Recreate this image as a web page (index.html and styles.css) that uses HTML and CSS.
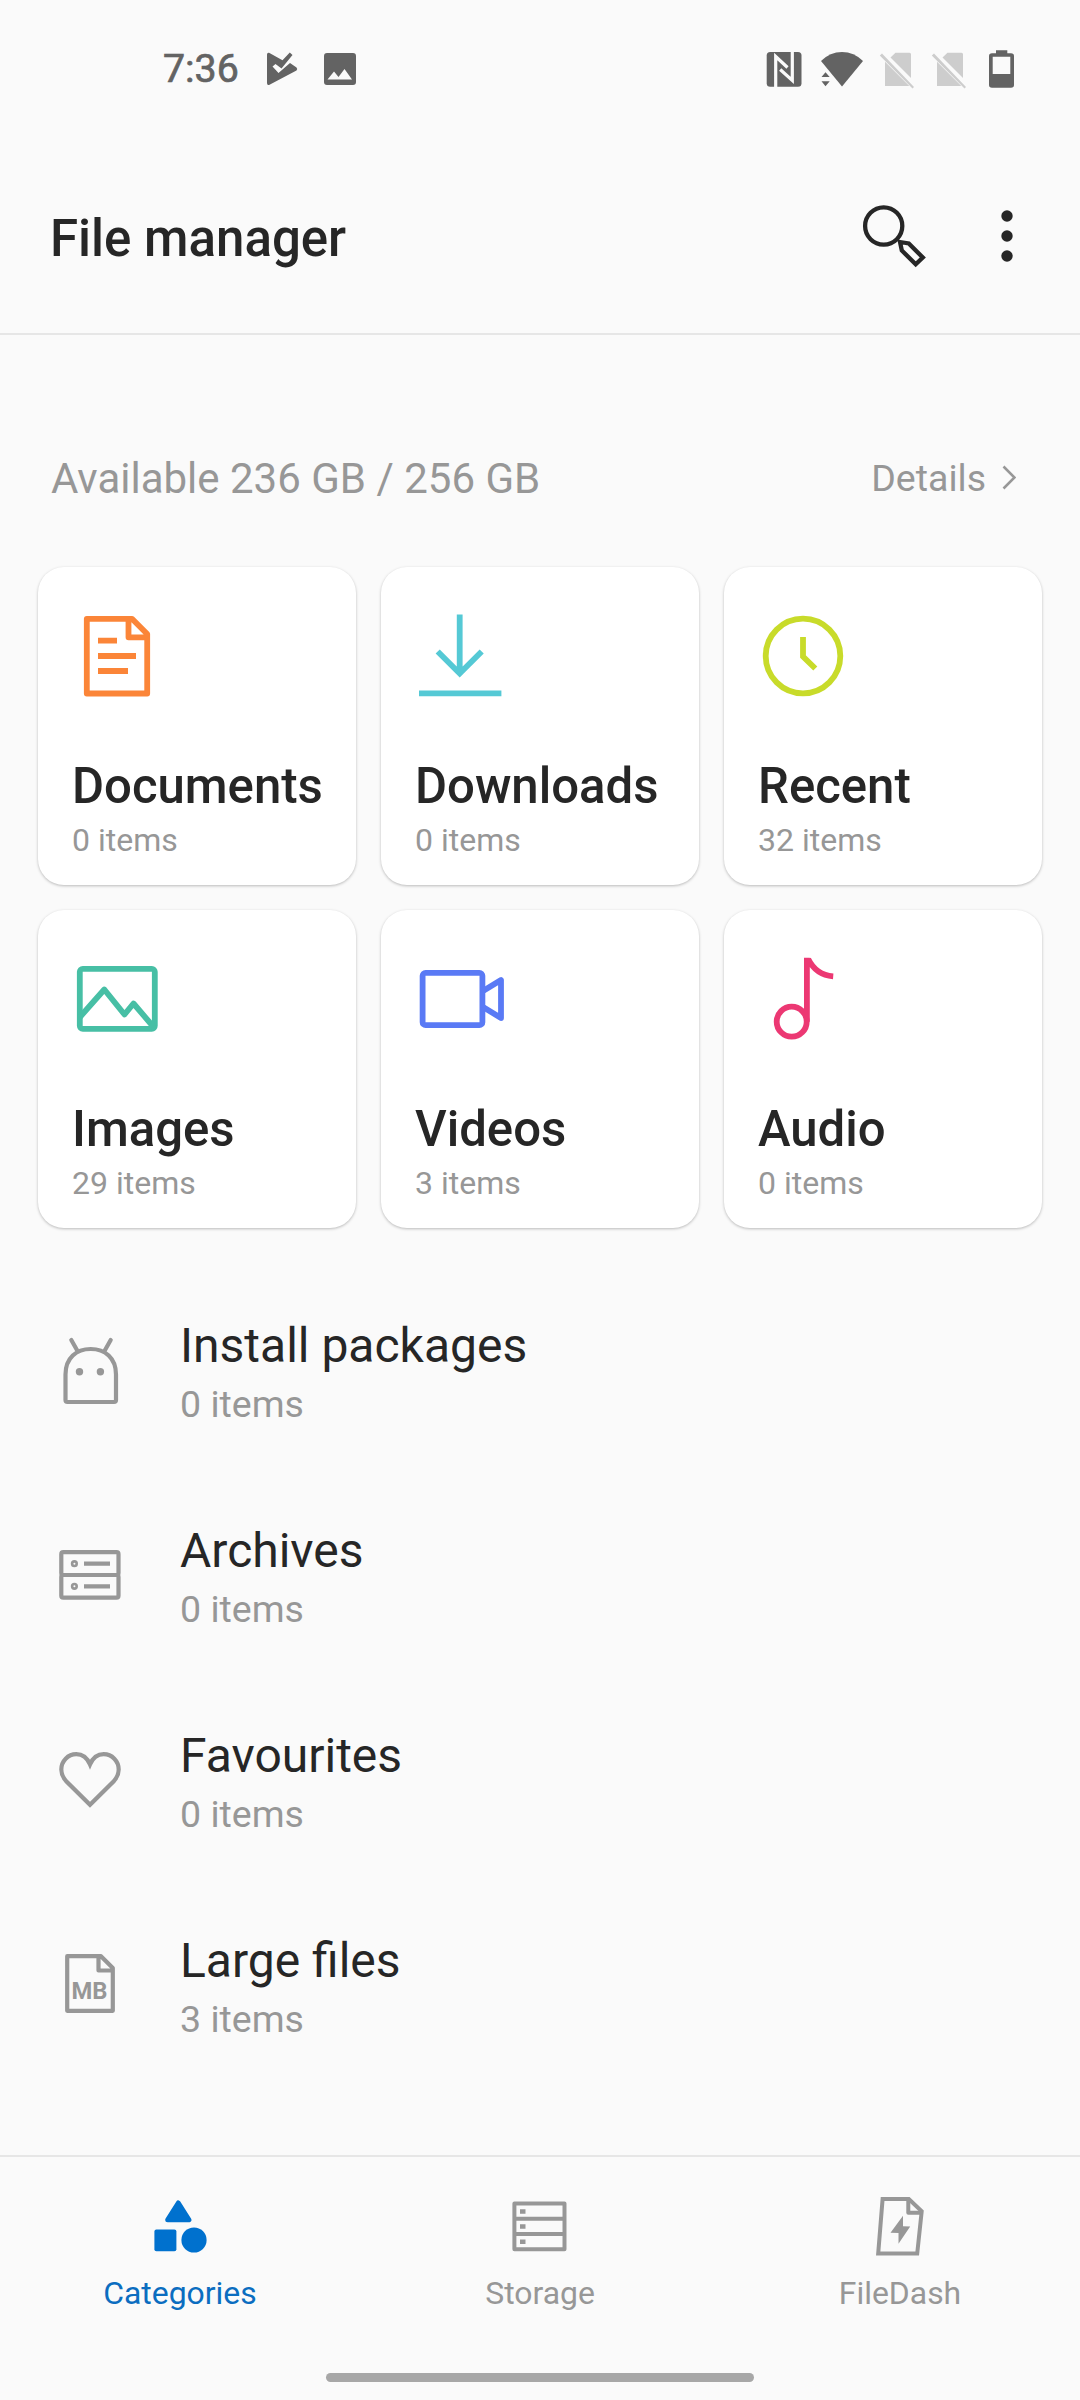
FILE: index.html
```html
<!DOCTYPE html>
<html lang="en">
<head>
<meta charset="utf-8">
<title>File manager</title>
<link rel="stylesheet" href="styles.css">
</head>
<body>
<div class="screen">
  <div class="status">
    <div class="status-left">
      <span class="clock">7:36</span>
      <svg class="play" width="32" height="34" viewBox="0 0 32 34"><path d="M0 2.500Q0 .5 2 .8L15.500 8.200L22.800 .5L25.500 3L14.500 16.500L8.500 12L5.500 14.500L11.500 21L23 11L29.500 15.500Q31 17 29.500 18.500L3 32.500Q0 34 0 31z"/></svg>
      <svg class="picture" width="32" height="34" viewBox="0 0 32 34"><path fill-rule="evenodd" d="M3 1H29Q32 1 32 4V30Q32 33 29 33H3Q0 33 0 30V4Q0 1 3 1zM3.500 27.500H28L20.500 17L14.500 25L10 19.500z"/></svg>
    </div>
    <div class="status-right">
      <svg width="36" height="40" viewBox="766 49 36 40"><rect x="766.700" y="52" width="34.800" height="34.700" rx="3.500"/><path class="cut" d="M775.700 87V56.500L787.500 67.500M792.300 51.500V80.500L780.200 69.500"/></svg>
      <svg class="wifi" width="44" height="40" viewBox="820 49 44 40"><path d="M842 86.500L821 61Q830 52 842 52T863 61z"/><path class="gap" d="M819 79.200L825.500 70L832 79.200L825.500 88z"/><path d="M821.500 77L825.500 72.300L829.700 77zM821.500 81.300H829.700L825.500 86.200z"/></svg>
      <svg class="sim" width="36" height="40" viewBox="879 49 36 40"><path d="M895.500 52.700H909.500Q911 52.700 911 54.200V78L890.500 57.500zM885 61.800L909.300 86H885zM882 53.500L914 87L912.500 88.500L879.800 55.500z"/></svg>
      <svg class="sim" width="36" height="40" viewBox="879 49 36 40"><path d="M895.500 52.700H909.500Q911 52.700 911 54.200V78L890.500 57.500zM885 61.800L909.300 86H885zM882 53.500L914 87L912.500 88.500L879.800 55.500z"/></svg>
      <svg width="26" height="40" viewBox="989 49 26 40"><path fill-rule="evenodd" d="M996 50.300H1007.300V53.300H1011Q1014 53.300 1014 56V85Q1014 87.700 1011 87.700H992Q989 87.700 989 85V56Q989 53.300 992 53.300H996zM992.700 56.700V74H1010.300V56.700z"/></svg>
    </div>
  </div>

  <header class="appbar">
    <h1>File manager</h1>
    <svg width="68" height="68" viewBox="860 202 68 68"><g fill="none" stroke="#262626" stroke-width="4.300"><circle cx="883.700" cy="225" r="18.600"/><path d="M900 241L908.800 242.500L922.800 256.500L915.700 263.200L901.800 249.500z"/></g></svg>
    <svg width="14" height="56" viewBox="1000 208 14 56"><g fill="#262626"><circle cx="1007" cy="216" r="5.700"/><circle cx="1007" cy="236" r="5.700"/><circle cx="1007" cy="256" r="5.700"/></g></svg>
  </header>

  <main>
    <div class="storage">
      <span class="available">Available 236 GB / 256 GB</span>
      <a class="details">Details<svg width="14" height="28" viewBox="0 0 14 28"><path d="M1.500 2.500L12.500 13.500L1.500 24.500" fill="none" stroke="#979797" stroke-width="2.600"/></svg></a>
    </div>

    <div class="grid">
      <div class="card orange">
        <svg viewBox="0 0 100 100"><path d="M18.800 11.800H64L79.200 27V86.500H18.800zM60.500 11.800V30.300H79.200"/><path class="flat" d="M30 33.700H49M30 49H68M30 64H60"/></svg>
        <h2>Documents</h2><p>0 items</p>
      </div>
      <div class="card cyan">
        <svg class="sharp" viewBox="0 0 100 100"><path d="M48.700 7.500V66M26.700 44.500L48.700 66.500L70.700 44.500M8 86.300H90.400"/></svg>
        <h2>Downloads</h2><p>0 items</p>
      </div>
      <div class="card lime">
        <svg class="sharp" viewBox="0 0 100 100"><circle cx="49" cy="49" r="37.300"/><path d="M49 30V49.500L61.300 61.500"/></svg>
        <h2>Recent</h2><p>32 items</p>
      </div>
      <div class="card green">
        <svg viewBox="0 0 100 100"><rect x="11.800" y="18.800" width="75" height="60" rx="3"/><path d="M12 67L36.300 39.500L56.500 64.500L65.500 53.500L86 77.500"/></svg>
        <h2>Images</h2><p>29 items</p>
      </div>
      <div class="card blue">
        <svg viewBox="0 0 100 100"><rect x="11.600" y="22.800" width="59.800" height="52.400" rx="3"/><path d="M72 41L90 30V68L72 57"/></svg>
        <h2>Videos</h2><p>3 items</p>
      </div>
      <div class="card pink">
        <svg class="sharp" viewBox="0 0 100 100"><circle cx="37.700" cy="71.700" r="15"/><path d="M52.900 7.800V71.700M54.200 9Q62 25 79.200 26.300"/></svg>
        <h2>Audio</h2><p>0 items</p>
      </div>
    </div>

    <ul class="list">
      <li>
        <svg viewBox="0 0 80 81"><path d="M15.500 68V42.500C15.500 26 26.500 17 40.700 17S66 26 66 42.500V68Q66 70 64 70H17.500Q15.500 70 15.500 68zM21.300 8L27.800 19.500M60.700 8L54.200 19.500"/><g class="solid"><circle cx="29.500" cy="39.700" r="3.700"/><circle cx="50.400" cy="39.700" r="3.700"/></g></svg>
        <div><h3>Install packages</h3><p>0 items</p></div>
      </li>
      <li>
        <svg viewBox="0 0 80 81"><rect x="11.300" y="15.200" width="57.200" height="22.800" rx="2"/><rect x="11.300" y="38" width="57.200" height="22.700" rx="2"/><g class="flat"><path d="M34 26.700H60M34 49.300H60"/></g><g class="ring"><circle cx="24.400" cy="26.700" r="2.300"/><circle cx="24.400" cy="49.300" r="2.300"/></g></svg>
        <div><h3>Archives</h3><p>0 items</p></div>
      </li>
      <li>
        <svg class="sharp" viewBox="0 0 80 81"><path d="M40 22.500C37 15.500 32 12.200 26.300 12.200C18 12.200 11.300 19 11.300 27.500C11.300 32 13 35.500 16 39L40 62.800L64 39C67 35.500 68.700 32 68.700 27.500C68.700 19 62 12.200 53.700 12.200C48 12.200 43 15.500 40 22.500z"/></svg>
        <div><h3>Favourites</h3><p>0 items</p></div>
      </li>
      <li>
        <svg viewBox="0 0 80 81"><path d="M17.200 9.200H51L62.800 21V63.800H17.200zM48.500 9.200V23.500H62.800"/><text x="21.500" y="52.300" textLength="36" lengthAdjust="spacingAndGlyphs">MB</text></svg>
        <div><h3>Large files</h3><p>3 items</p></div>
      </li>
    </ul>
  </main>

  <nav>
    <a class="tab active">
      <svg viewBox="0 0 80 72"><path class="tri" d="M38.300 13L48.900 29.800H27.700z"/><rect x="14.400" y="39.500" width="22" height="21.700" rx="2"/><circle cx="54" cy="50" r="12.600"/></svg>
      Categories
    </a>
    <a class="tab">
      <svg viewBox="0 0 80 72"><path class="line" d="M14.400 13.500H64.500V59.200H14.400zM14.400 28.800H64.500M14.400 44H64.500"/><path d="M20 19.200h5.500v4.500h-5.500zM20 34.300h5.500v4.500h-5.500zM20 49.400h5.500v4.500h-5.500z"/></svg>
      Storage
    </a>
    <a class="tab">
      <svg viewBox="0 0 80 72"><path class="line sharp" d="M22.600 9H48.800L61.700 21.300L57.200 63.600H18.200z"/><path class="line" d="M48.300 9.500V22.700H61.300"/><path d="M43 25.700V36.300L50.200 36.600L38.500 53.700V43L30.500 42.700z"/></svg>
      FileDash
    </a>
  </nav>
  <div class="home"></div>
</div>
</body>
</html>
```
FILE: styles.css
```css
* { box-sizing: border-box; margin: 0; padding: 0; }
body { background: #fafafa; font-family: Roboto, sans-serif; color: #262626; }
svg { display: block; flex: none; }
h1, h2 { font-weight: 500; }
h3 { font-weight: 400; }
.screen { width: 1080px; height: 2400px; overflow: hidden; display: flex; flex-direction: column; }

.status { height: 138px; padding: 49px 65px 0 163px; display: flex; justify-content: space-between; align-items: flex-start; fill: #636363; }
.status-left, .status-right { display: flex; align-items: flex-start; }
.clock { width: 104px; font-size: 39.300px; line-height: 40px; font-weight: 400; color: #636363; -webkit-text-stroke: .7px #636363; }
.play { margin-top: 3px; }
.picture { margin: 3px 0 0 25px; }
.cut { fill: none; stroke: #fafafa; stroke-width: 3.200; }
.wifi { margin: 0 15px 0 18px; }
.gap { fill: #fafafa; }
.sim { margin-right: 16px; fill: #cdcdcd; }
.sim + svg:last-child { margin-left: 6px; }

.appbar { height: 197px; padding: 64px 66px 0 50px; display: flex; border-bottom: 2px solid #e6e6e6; }
.appbar h1 { flex: 1; padding-top: 1px; font-size: 51px; line-height: 72px; }
.appbar svg { margin-top: 1px; }
.appbar svg + svg { margin: 6px 0 0 72px; }

main { height: 1820px; }
.storage { height: 232px; padding: 114px 64px 0 51px; display: flex; justify-content: space-between; color: #979797; }
.available { font-size: 42px; line-height: 60px; }
.details { display: flex; align-items: center; height: 58px; font-size: 37.500px; gap: 16px; }

.grid { display: grid; grid-template-columns: repeat(3, 318px); grid-auto-rows: 318px; gap: 25px; padding: 0 38px; }
.card { background: #fff; border-radius: 26px; padding: 40px 0 0 30px; box-shadow: 0 1px 3px rgba(0, 0, 0, .26); }
.card svg { width: 100px; height: 100px; fill: none; stroke: currentColor; stroke-width: 5.800; stroke-linejoin: round; }
.card svg.sharp { stroke-linejoin: miter; }
.card h2 { margin: 51px 0 0 4px; font-size: 49.100px; line-height: 57px; color: #262626; }
.card p { margin: 5px 0 0 4px; font-size: 32px; line-height: 40px; color: #979797; }
.orange { color: #fb8538; }
.cyan { color: #55c9d5; }
.lime { color: #c8db2a; }
.green { color: #47bfa5; }
.blue { color: #5a7af5; }
.pink { color: #ec3873; }

.list { list-style: none; margin-top: 42px; padding-left: 50px; }
.list li { height: 205px; display: flex; align-items: center; gap: 50px; }
.list svg { width: 80px; height: 81px; fill: none; stroke: #979797; stroke-width: 4.200; stroke-linejoin: round; stroke-linecap: round; }
.list svg.sharp { stroke-linejoin: miter; }
.list .solid { fill: #979797; stroke: none; }
.flat { stroke-linecap: butt; }
.list .ring { stroke-width: 2.600; }
.list text { fill: #979797; stroke: none; font: 700 23.500px Roboto, sans-serif; }
.list h3 { font-size: 48px; line-height: 56px; }
.list p { margin: 8px 0 1px; font-size: 37.500px; line-height: 44px; color: #979797; }

nav { height: 158px; border-top: 2px solid #e6e6e6; padding-top: 33px; display: grid; grid-template-columns: repeat(3, 1fr); }
.tab { display: flex; flex-direction: column; align-items: center; gap: 11px; font-size: 31.900px; line-height: 40px; color: #979797; }
.tab svg { width: 80px; height: 72px; fill: currentColor; }
.tab.active { color: #0b6dc0; }
.tab.active svg { fill: #0071ce; }
.tri { stroke: #0071ce; stroke-width: 5; stroke-linejoin: round; }
.line { fill: none; stroke: currentColor; stroke-width: 4; stroke-linejoin: round; }
.line.sharp { stroke-linejoin: miter; }
.home { width: 428px; height: 9px; margin: 60px auto 0; border-radius: 5px; background: #a7a7a7; }
```
